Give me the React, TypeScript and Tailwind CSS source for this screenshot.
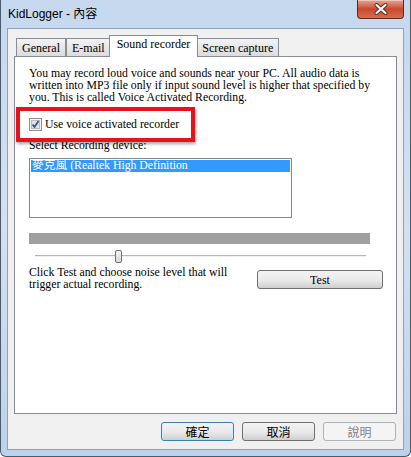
import React from "react";

const serif = { fontFamily: '"Liberation Serif", "Noto Sans CJK TC", serif' } as const;
const cjk = { fontFamily: '"Noto Sans CJK TC", "Noto Sans", sans-serif' } as const;

function Tab({ label, active }: { label: string; active?: boolean }) {
  if (active) {
    return (
      <div className="relative z-10 -mb-px -mx-[2px] flex h-[22px] items-start border border-b-0 border-[#898c95] bg-white px-[7px] pt-[1px] text-[12px] leading-[14px] text-black">
        {label}
      </div>
    );
  }
  return (
    <div className="flex h-[18px] items-center border border-b-0 border-[#898c95] bg-gradient-to-b from-[#f3f3f3] to-[#dcdcdc] px-[5px] text-[12px] leading-[14px] text-black">
      {label}
    </div>
  );
}

function Checkbox() {
  return (
    <svg width="13" height="13" viewBox="0 0 13 13" className="shrink-0">
      <rect x="0.5" y="0.5" width="12" height="12" fill="#f4f4f4" stroke="#8e8f8f" />
      <rect x="2.5" y="2.5" width="8" height="8" fill="#dfe3ea" stroke="#b6bcc6" />
      <path d="M3.5 6.5 L5.5 9 L9.5 3" fill="none" stroke="#3d5585" strokeWidth="1.8" strokeLinejoin="round" />
    </svg>
  );
}

function Button({ label, kind }: { label: string; kind?: "default" | "disabled" }) {
  const base = "flex h-[19px] w-[73px] items-center justify-center rounded-[3px] border text-[12px] leading-[14px]";
  if (kind === "default") {
    return (
      <div className={`${base} border-[#3c7fb1] bg-gradient-to-b from-[#eaf6fd] to-[#bee6fd] text-black`} style={cjk}>
        <div className="m-[1px] flex h-full w-full items-center justify-center rounded-[2px] bg-gradient-to-b from-[#f2f2f2] via-[#ebebeb] to-[#cfcfcf]">{label}</div>
      </div>
    );
  }
  if (kind === "disabled") {
    return (
      <div className={`${base} border-[#adb2b5] bg-[#f4f4f4] text-[#838383]`} style={cjk}>
        {label}
      </div>
    );
  }
  return (
    <div className={`${base} border-[#707070] bg-gradient-to-b from-[#f2f2f2] via-[#ebebeb] to-[#cfcfcf] text-black`} style={cjk}>
      {label}
    </div>
  );
}

export default function App() {
  return (
    <div className="relative flex h-[457px] w-[411px] flex-col overflow-hidden rounded-b-[6px] border-x border-b border-[#4b5a6b] bg-gradient-to-b from-[#c5d8ee] via-[#d3e1f1] to-[#bcd2ea]">
      {/* title bar */}
      <div className="flex h-[28px] shrink-0 items-start justify-between pl-[7px] pr-[6px]">
        <div className="pt-[6px] text-[12px] leading-[16px] text-black" style={{ fontFamily: '"Liberation Sans", "Noto Sans CJK TC", sans-serif' }}>
          KidLogger - 內容
        </div>
        <div className="flex h-[19px] w-[47px] items-center justify-center rounded-b-[4px] border border-t-0 border-[#5b2a24] bg-gradient-to-b from-[#e6a596] via-[#c9472f] to-[#d86d4f] shadow-[inset_0_1px_0_rgba(255,255,255,0.4)]">
          <svg width="14" height="12" viewBox="0 0 14 12">
            <path d="M2.5 2 L11.5 10 M11.5 2 L2.5 10" stroke="#5a2a20" strokeWidth="4" strokeLinecap="round" />
            <path d="M2.5 2 L11.5 10 M11.5 2 L2.5 10" stroke="#ffffff" strokeWidth="2.2" strokeLinecap="round" />
          </svg>
        </div>
      </div>

      {/* client area */}
      <div className="mx-[6px] flex flex-1 flex-col border border-[#8fa2b7] bg-[#f0f0f0] px-[6px] pt-[6px]">
        <div className="flex items-end pl-[2px]" style={serif}>
          <Tab label="General" />
          <Tab label="E-mail" />
          <Tab label="Sound recorder" active />
          <Tab label="Screen capture" />
        </div>

        <div className="relative h-[358px] border border-[#898c95] bg-white pl-[14px] pt-[11px] text-[11.75px] leading-[12px] text-black" style={serif}>
          <p className="whitespace-nowrap">
            You may record loud voice and sounds near your PC. All audio data is
            <br />
            written into MP3 file only if input sound level is higher that specified by
            <br />
            you. This is called Voice Activated Recording.
          </p>

          <div className="mt-[14px] flex h-[13px] items-center gap-[3px]">
            <Checkbox />
            <span className="whitespace-nowrap">Use voice activated recorder</span>
          </div>

          <div className="mt-[9px] whitespace-nowrap">Select Recording device:</div>

          <div className="mt-[6px] h-[60px] w-[263px] border border-[#828790] bg-white p-[1px]">
            <div className="h-[12px] whitespace-nowrap bg-[#3399ff] pl-[1px] text-white">麥克風 (Realtek High Definition</div>
          </div>

          <div className="mt-[15px] h-[11px] w-[341px] bg-[#a0a0a0]" />

          <div className="relative mt-[6px] h-[13px] w-[341px]">
            <div className="absolute left-[6px] right-[4px] top-[5px] h-[1px] bg-[#b4b4b4]" />
            <div className="absolute left-[6px] right-[4px] top-[6px] h-[1px] bg-[#f0f0f0]" />
            <div className="absolute left-[86px] top-0 h-[13px] w-[7px] rounded-[2px] border border-[#6f6f6f] bg-gradient-to-b from-[#f6f6f6] to-[#d8d8d8]" />
          </div>

          <div className="mt-[4px] flex items-start justify-between pr-[13px]">
            <p className="whitespace-nowrap">
              Click Test and choose noise level that will
              <br />
              trigger actual recording.
            </p>
            <div className="mt-[3px] flex h-[19px] w-[126px] items-center justify-center rounded-[3px] border border-[#707070] bg-gradient-to-b from-[#f2f2f2] via-[#ebebeb] to-[#cfcfcf] text-[12px] leading-[14px]">
              Test
            </div>
          </div>

          {/* red highlight annotation */}
          <div className="absolute left-[1px] top-[50px] h-[35px] w-[179px] border-[4px] border-[#e8121a] shadow-[1px_2px_3px_rgba(0,0,0,0.35)]" />
        </div>

        <div className="mt-[8px] flex justify-end gap-[8px] pr-[1px]">
          <Button label="確定" kind="default" />
          <Button label="取消" />
          <Button label="說明" kind="disabled" />
        </div>
      </div>
      <div className="h-[6px] shrink-0" />
    </div>
  );
}
